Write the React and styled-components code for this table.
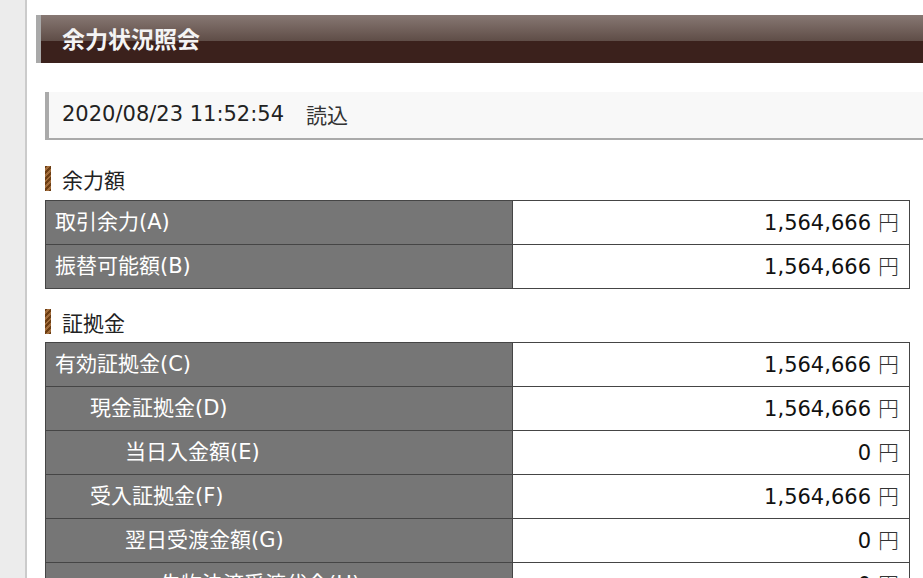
import React from 'react';
import styled, { createGlobalStyle } from 'styled-components';

const GlobalStyle = createGlobalStyle`
  html, body {
    margin: 0;
    padding: 0;
    background: #fff;
    font-family: 'DejaVu Sans', 'Noto Sans CJK JP', sans-serif;
    overflow: hidden;
  }
`;

const Page = styled.div`
  display: flex;
  min-height: 100vh;
`;

const Sidebar = styled.div`
  width: 25px;
  flex-shrink: 0;
  background: #ececec;
  border-right: 2px solid #cbcbcb;
`;

const Main = styled.main`
  flex: 1;
  padding: 15px 0 0 9px;
  min-width: 0;
`;

const TitleBar = styled.h1`
  margin: 0;
  height: 48px;
  display: flex;
  align-items: center;
  padding: 0 0 2px 21px;
  box-sizing: border-box;
  border-left: 5px solid #a9a9a9;
  background: linear-gradient(
    to bottom,
    #877873 0,
    #5f4d47 26px,
    #3b211c 26px,
    #3b211c 100%
  );
  color: #f4f4f4;
  font-size: 23px;
  font-weight: bold;
  font-family: 'Noto Sans CJK JP', sans-serif;
`;

const Content = styled.div`
  padding: 29px 0 0 9px;
`;

const LoadBox = styled.div`
  height: 44px;
  display: flex;
  align-items: center;
  padding: 0 0 2px 13px;
  box-sizing: content-box;
  background: #f8f8f8;
  border-left: 4px solid #aaaaaa;
  border-bottom: 2px solid #aaaaaa;
  font-size: 21px;
  color: #222;
`;

const ReloadLink = styled.span`
  margin-left: 22px;
  color: #333;
  cursor: pointer;
`;

const SectionTitle = styled.h2`
  margin: ${p => p.$first ? '26px' : '20px'} 0 ${p => p.$first ? '9px' : '8px'};
  display: flex;
  align-items: center;
  height: 25px;
  font-size: 21px;
  font-weight: normal;
  color: #222;

  &::before {
    content: '';
    width: 6px;
    height: 25px;
    margin-right: 11px;
    background: repeating-linear-gradient(
      -45deg,
      #6c3d12 0,
      #6c3d12 2px,
      #a26d3c 2px,
      #a26d3c 4px
    );
  }
`;

const Table = styled.table`
  width: calc(100% - 13px);
  border-collapse: collapse;
  table-layout: fixed;
  font-size: 21px;
`;

const Row = styled.tr`
  height: 44px;
`;

const LabelCell = styled.th`
  width: 467px;
  padding: 0 0 1px ${p => 9 + p.$level * 35}px;
  box-sizing: border-box;
  background: #767676;
  color: #fff;
  font-weight: normal;
  text-align: left;
  border: 1px solid #454545;
  white-space: nowrap;
  line-height: 1;
`;

const ValueCell = styled.td`
  padding: 0 10px 1px 0;
  box-sizing: border-box;
  text-align: right;
  color: #111;
  border: 1px solid #454545;
  line-height: 1;
`;

const Yen = styled.span`
  margin-left: 7px;
  color: #333;
  font-family: 'Noto Sans CJK JP', sans-serif;
  font-weight: 300;
`;

const yoryoku = [
  { label: '取引余力(A)', value: '1,564,666', level: 0 },
  { label: '振替可能額(B)', value: '1,564,666', level: 0 },
];

const shokokin = [
  { label: '有効証拠金(C)', value: '1,564,666', level: 0 },
  { label: '現金証拠金(D)', value: '1,564,666', level: 1 },
  { label: '当日入金額(E)', value: '0', level: 2 },
  { label: '受入証拠金(F)', value: '1,564,666', level: 1 },
  { label: '翌日受渡金額(G)', value: '0', level: 2 },
  { label: '先物決済受渡代金(H)', value: '0', level: 3 },
];

const AmountTable = ({ rows }) => (
  <Table>
    <tbody>
      {rows.map(r => (
        <Row key={r.label}>
          <LabelCell $level={r.level}>{r.label}</LabelCell>
          <ValueCell>
            {r.value}
            <Yen>円</Yen>
          </ValueCell>
        </Row>
      ))}
    </tbody>
  </Table>
);

export default function App() {
  return (
    <Page>
      <GlobalStyle />
      <Sidebar />
      <Main>
        <TitleBar>余力状況照会</TitleBar>
        <Content>
          <LoadBox>
            2020/08/23 11:52:54
            <ReloadLink>読込</ReloadLink>
          </LoadBox>

          <SectionTitle $first>余力額</SectionTitle>
          <AmountTable rows={yoryoku} />

          <SectionTitle>証拠金</SectionTitle>
          <AmountTable rows={shokokin} />
        </Content>
      </Main>
    </Page>
  );
}
